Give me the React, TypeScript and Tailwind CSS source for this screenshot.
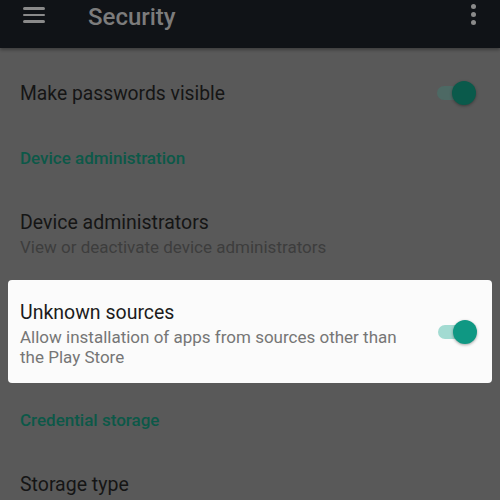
function Toggle({ dim }: { dim?: boolean }) {
    return (
        <div className="flex items-center shrink-0">
            <div className={`w-[30px] h-[14px] rounded-full ${dim ? 'bg-[#4d6964]' : 'bg-[#a3dbd2]'}`}></div>
            <div
                className={`w-6 h-6 rounded-full -ml-[15px] shadow-[0_1px_3px_rgba(0,0,0,0.35)] ${
                    dim ? 'bg-[#0a5a4b]' : 'bg-[#0f9883]'
                }`}
            ></div>
        </div>
    )
}

export default function App() {
    return (
        <div className="w-[500px] h-[500px] overflow-hidden bg-[#595959] flex flex-col font-['Roboto',sans-serif]">
            {/* Toolbar */}
            <div className="h-12 shrink-0 bg-[#101317] flex items-start pl-[23px] pr-[24px] shadow-[0_2px_3px_rgba(0,0,0,0.3)]">
                <div className="flex flex-col gap-[4px] w-[22px] mt-[7px]">
                    <span className="block h-[2.5px] bg-[#8a8a8a] rounded-sm"></span>
                    <span className="block h-[2.5px] bg-[#8a8a8a] rounded-sm"></span>
                    <span className="block h-[2.5px] bg-[#8a8a8a] rounded-sm"></span>
                </div>
                <span className="ml-[43px] mt-[1px] text-[24px] leading-[32px] font-medium text-[#7c7c7c]">Security</span>
                <div className="ml-auto flex flex-col gap-[3px] mt-[4px]">
                    <span className="block w-[5px] h-[5px] rounded-full bg-[#8a8a8a]"></span>
                    <span className="block w-[5px] h-[5px] rounded-full bg-[#8a8a8a]"></span>
                    <span className="block w-[5px] h-[5px] rounded-full bg-[#8a8a8a]"></span>
                </div>
            </div>

            {/* Make passwords visible */}
            <div className="h-[90px] shrink-0 flex items-center pl-5 pr-[24px]">
                <span className="text-[19.3px] leading-[26px] text-[#151515] pt-[2px]">Make passwords visible</span>
                <div className="ml-auto">
                    <Toggle dim />
                </div>
            </div>

            {/* Device administration */}
            <div className="h-10 shrink-0 flex items-center pl-5 pt-[2px]">
                <span className="text-[17px] font-medium text-[#0c5848]">Device administration</span>
            </div>

            <div className="h-[102px] shrink-0 flex flex-col pl-5 pt-[32px]">
                <span className="text-[19.5px] leading-[26px] text-[#151515]">Device administrators</span>
                <span className="text-[17px] leading-[22px] text-[#3d3d3d]">
                    View or deactivate device administrators
                </span>
            </div>

            {/* Highlighted card */}
            <div className="mx-2 h-[103px] shrink-0 bg-[#fbfbfb] rounded-[4px] flex items-center pl-3 pr-[15px]">
                <div className="flex flex-col w-[395px] pt-[2px]">
                    <span className="text-[19.5px] leading-[26px] text-[#1c1c1c] pt-[1px]">Unknown sources</span>
                    <span className="text-[17px] leading-[20px] text-[#767676] mt-[1px]">
                        Allow installation of apps from sources other than the Play Store
                    </span>
                </div>
                <div className="ml-auto">
                    <Toggle />
                </div>
            </div>

            {/* Credential storage */}
            <div className="h-[72px] shrink-0 flex items-center pl-5 pt-[3px]">
                <span className="text-[17px] font-medium text-[#0c5848]">Credential storage</span>
            </div>

            <div className="pl-5 pt-[17px]">
                <span className="text-[19.5px] leading-[26px] text-[#151515]">Storage type</span>
            </div>
        </div>
    )
}
